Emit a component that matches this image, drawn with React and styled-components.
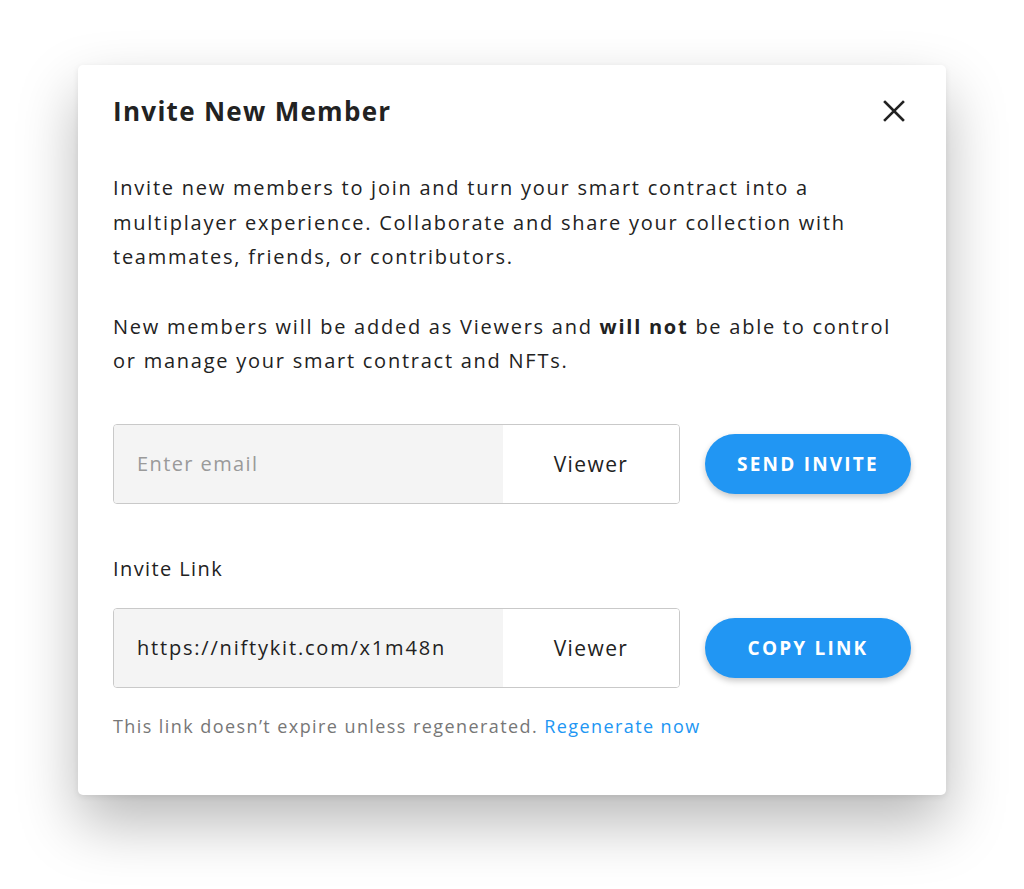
import React from 'react';
import styled, { createGlobalStyle } from 'styled-components';

const Global = createGlobalStyle`
  html, body { margin: 0; padding: 0; background: #ffffff; }
  body { font-family: "Open Sans", "Liberation Sans", sans-serif; color: #222; letter-spacing: 1.4px; }
  * { box-sizing: border-box; }
`;

const Page = styled.div`
  width: 1024px;
  height: 889px;
  padding: 65px 0 0 78px;
`;

const Card = styled.div`
  width: 868px;
  height: 730px;
  background: #fff;
  border-radius: 5px;
  box-shadow: 0 28px 60px rgba(0, 0, 0, 0.28), 0 2px 6px rgba(0, 0, 0, 0.08);
  padding: 27px 35px 0 35px;
`;

const Header = styled.div`
  display: flex;
  align-items: center;
  justify-content: space-between;
  height: 38px;
  margin-bottom: 41px;
`;

const Title = styled.h2`
  margin: 0;
  font-size: 26px;
  font-weight: 700;
  color: #222;
  letter-spacing: 1.3px;
`;

const CloseBtn = styled.button`
  border: none;
  background: none;
  padding: 0;
  width: 24px;
  height: 24px;
  margin-right: 5px;
  display: flex;
  align-items: center;
  justify-content: center;
  cursor: pointer;
`;

const Para = styled.p`
  margin: 0 0 ${(p) => p.$gap || 0}px;
  font-size: 20px;
  line-height: 34.5px;
  letter-spacing: 1.75px;
  color: #222;
  b { font-weight: 700; }
`;

const Row = styled.div`
  display: flex;
  align-items: center;
  gap: 25px;
  margin-top: ${(p) => p.$top || 0}px;
`;

const Field = styled.div`
  display: flex;
  width: 567px;
  height: 80px;
  border: 1px solid #c9c9c9;
  border-radius: 4px;
  overflow: hidden;
`;

const FieldInput = styled.div`
  flex: 0 0 389px;
  background: #f4f4f4;
  display: flex;
  align-items: center;
  padding-left: 23px;
  font-size: 20px;
  letter-spacing: ${(p) => (p.$placeholder ? 1.4 : 1.8)}px;
  color: ${(p) => (p.$placeholder ? '#9a9a9a' : '#222')};
`;

const Role = styled.div`
  flex: 1;
  display: flex;
  align-items: center;
  justify-content: center;
  font-size: 21px;
  color: #222;
  background: #fff;
`;

const PillButton = styled.button`
  width: 206px;
  height: 60px;
  border: none;
  border-radius: 30px;
  background: #2196f3;
  color: #fff;
  font-family: inherit;
  font-size: 19px;
  font-weight: 700;
  letter-spacing: 2.2px;
  box-shadow: 0 3px 6px rgba(0, 0, 0, 0.22);
  cursor: pointer;
`;

const Label = styled.div`
  margin-top: 48px;
  font-size: 20px;
  line-height: 34px;
  color: #222;
`;

const Note = styled.p`
  margin: 22px 0 0;
  font-size: 18px;
  line-height: 32px;
  letter-spacing: 1.42px;
  color: #777;
`;

const Link = styled.a`
  color: #2196f3;
  text-decoration: none;
  cursor: pointer;
`;

export default function App() {
  return (
    <>
      <Global />
      <Page>
        <Card>
          <Header>
            <Title>Invite New Member</Title>
            <CloseBtn aria-label="Close">
              <svg width="22" height="22" viewBox="0 0 22 22" fill="none" stroke="#222" strokeWidth="2.6" strokeLinecap="square">
                <path d="M2 2 L20 20 M20 2 L2 20" />
              </svg>
            </CloseBtn>
          </Header>
          <Para $gap={35}>
            Invite new members to join and turn your smart contract into a multiplayer experience. Collaborate and share your collection with teammates, friends, or contributors.
          </Para>
          <Para>
            New members will be added as Viewers and <b>will not</b> be able to control or manage your smart contract and NFTs.
          </Para>
          <Row $top={45}>
            <Field>
              <FieldInput $placeholder>Enter email</FieldInput>
              <Role>Viewer</Role>
            </Field>
            <PillButton>SEND INVITE</PillButton>
          </Row>
          <Label>Invite Link</Label>
          <Row $top={22}>
            <Field>
              <FieldInput>https://niftykit.com/x1m48n</FieldInput>
              <Role>Viewer</Role>
            </Field>
            <PillButton>COPY LINK</PillButton>
          </Row>
          <Note>
            This link doesn’t expire unless regenerated. <Link>Regenerate now</Link>
          </Note>
        </Card>
      </Page>
    </>
  );
}
